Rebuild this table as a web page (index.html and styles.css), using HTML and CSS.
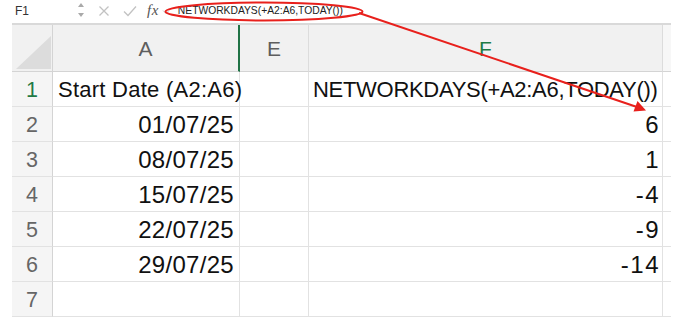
FILE: index.html
```html
<!DOCTYPE html>
<html>
<head>
<meta charset="utf-8">
<link rel="stylesheet" href="styles.css">
</head>
<body>
<div class="page">
  <div class="sheet">
    <div class="toolbar">
      <div class="namebox">F1</div>
      <svg class="spinner" width="8" height="16" viewBox="0 0 8 16"><path d="M4 1 L7 5 L1 5 Z" fill="#a9a9a9"/><path d="M4 15 L7 11 L1 11 Z" fill="#a9a9a9"/></svg>
      <div class="actions">
        <svg class="icon" width="12" height="12" viewBox="0 0 12 12"><path d="M1.5 1.5 L10.5 10.5 M10.5 1.5 L1.5 10.5" stroke="#c2c2c2" stroke-width="1.3" fill="none"/></svg>
        <svg class="icon" width="14" height="12" viewBox="0 0 14 12"><path d="M1 6.5 L5 10.5 L13 1.5" stroke="#c2c2c2" stroke-width="1.3" fill="none"/></svg>
        <span class="fx">fx</span>
        <svg class="chev" width="8" height="6" viewBox="0 0 8 6"><path d="M1 1.5 L4 4.5 L7 1.5" stroke="#c8c8c8" stroke-width="1" fill="none"/></svg>
      </div>
      <div class="formula">NETWORKDAYS(+A2:A6,TODAY())</div>
    </div>
    <div class="grid">
      <div class="corner"><svg width="41" height="47" viewBox="0 0 41 47"><path d="M4 44 L39 11 L39 44 Z" fill="#dcdcdc"/></svg></div>
      <div class="colhead colhead-split">A</div>
      <div class="colhead">E</div>
      <div class="colhead colhead-active">F</div>
      <div class="colhead colhead-edge"></div>

      <div class="rowhead rowhead-active">1</div>
      <div class="cell text">Start Date (A2:A6)</div>
      <div class="cell"></div>
      <div class="cell text formula-head">NETWORKDAYS(+A2:A6,TODAY())</div>
      <div class="cell edge"></div>

      <div class="rowhead">2</div>
      <div class="cell num">01/07/25</div>
      <div class="cell"></div>
      <div class="cell num result">6</div>
      <div class="cell edge"></div>

      <div class="rowhead">3</div>
      <div class="cell num">08/07/25</div>
      <div class="cell"></div>
      <div class="cell num result">1</div>
      <div class="cell edge"></div>

      <div class="rowhead">4</div>
      <div class="cell num">15/07/25</div>
      <div class="cell"></div>
      <div class="cell num result">-4</div>
      <div class="cell edge"></div>

      <div class="rowhead">5</div>
      <div class="cell num">22/07/25</div>
      <div class="cell"></div>
      <div class="cell num result">-9</div>
      <div class="cell edge"></div>

      <div class="rowhead">6</div>
      <div class="cell num">29/07/25</div>
      <div class="cell"></div>
      <div class="cell num result">-14</div>
      <div class="cell edge"></div>

      <div class="rowhead">7</div>
      <div class="cell"></div>
      <div class="cell"></div>
      <div class="cell"></div>
      <div class="cell edge"></div>
    </div>
  </div>
  <svg class="annot" width="690" height="321" viewBox="0 0 690 321">
    <ellipse cx="264" cy="11.5" rx="98.5" ry="9" fill="none" stroke="#e8201c" stroke-width="2"/>
    <line x1="359" y1="13" x2="637" y2="107" stroke="#e8201c" stroke-width="2"/>
    <path d="M646 110.5 L633.5 111.5 L637.5 101 Z" fill="#e8201c"/>
  </svg>
</div>
</body>
</html>
```
FILE: styles.css
```css
* { box-sizing: border-box; }
html, body { margin: 0; padding: 0; background: #ffffff; }
body { font-family: "Liberation Sans", Arial, Helvetica, sans-serif; color: #111; overflow: hidden; width: 690px; height: 321px; }
.page { position: relative; width: 690px; height: 321px; }
.sheet { margin-left: 12px; width: 659px; }

.toolbar {
  height: 25px;
  display: flex;
  align-items: center;
  border-bottom: 2px solid #d9d9d9;
  padding-bottom: 2px;
}
.namebox { width: 65px; padding-left: 3px; font-size: 12px; color: #333; }
.spinner { margin-top: -2px; }
.actions {
  display: flex;
  align-items: center;
  margin-left: 13px;
}
.actions .icon:first-child { margin-right: 13px; }
.actions .icon:nth-child(2) { margin-right: 10px; }
.fx { font-family: "Liberation Serif", "Times New Roman", serif; font-style: italic; font-size: 15px; color: #555; letter-spacing: 0.5px; }
.chev { margin-left: 3px; margin-top: 2px; }
.formula { margin-left: 8px; font-size: 10.3px; color: #222; }

.grid {
  display: grid;
  grid-template-columns: 41px 187px 69px 354px 8px;
  grid-template-rows: 47px repeat(7, 35px);
}
.corner { background: #f1f1f1; border-right: 1px solid #d4d4d4; border-bottom: 1px solid #d4d4d4; }
.corner svg { display: block; }
.colhead {
  background: #f1f1f1;
  border-right: 1px solid #dcdcdc;
  border-bottom: 1px solid #d4d4d4;
  display: flex;
  align-items: center;
  justify-content: center;
  font-size: 21px;
  color: #5e5e5e;
  padding-top: 2px;
}
.colhead-split { border-right: 2px solid #217346; }
.colhead-active { color: #1f7a45; }
.colhead-edge { background: #f7f7f7; border-right: none; }

.rowhead {
  background: #f5f5f5;
  border-right: 1px solid #d4d4d4;
  border-bottom: 1px solid #e2e2e2;
  display: flex;
  align-items: center;
  justify-content: center;
  font-size: 21.5px;
  color: #666;
  padding-top: 2px;
}
.rowhead-active { color: #1f7a45; }

.cell {
  border-right: 1px solid #e2e2e2;
  border-bottom: 1px solid #e2e2e2;
  display: flex;
  align-items: center;
  white-space: nowrap;
  overflow: visible;
  padding-top: 2px;
}
.cell.edge { border-right: none; }
.text { font-size: 22px; padding-left: 5px; letter-spacing: 0.25px; }
.formula-head { padding-left: 4px; letter-spacing: -0.3px; }
.num { font-size: 24px; justify-content: flex-end; padding-right: 5px; letter-spacing: 0.3px; }
.result { padding-right: 2px; letter-spacing: 1.5px; }

.annot { position: absolute; left: 0; top: 0; pointer-events: none; }
```
